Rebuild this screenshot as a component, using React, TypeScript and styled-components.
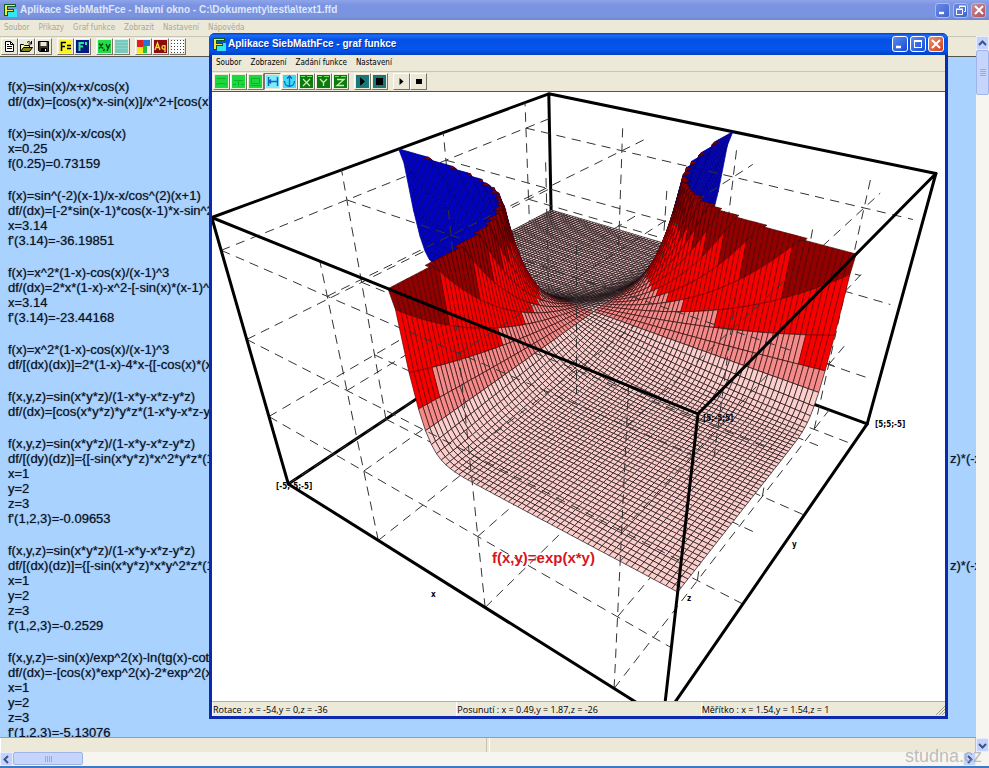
import React from 'react';
import styled, { createGlobalStyle } from 'styled-components';

const GlobalStyle = createGlobalStyle`
  * { box-sizing: border-box; }
  html, body, #root { height: 100%; }
  body { margin: 0; overflow: hidden; background: #ece9d8; }
  button { padding: 0; border: 0; background: none; font: inherit; color: inherit; cursor: default; }
`;

const uiFont = '"DejaVu Sans Condensed", "DejaVu Sans", sans-serif';
const titleFont = '"Liberation Sans", Arial, sans-serif';
const docFont = '"Liberation Sans", Arial, sans-serif';

/* ---------- Surface plot ---------- */

const RANGE = 5;
const CELLS = 100;
const STEP = (2 * RANGE) / CELLS;
const CAMERA = [
  [106.075, 246.438, -64.023, 593.413],
  [24.511, -33.6, -165.081, 337.66],
  [-0.13901, 0.19249, -0.11117, 1],
];

type Point = [number, number];
type Vec = [number, number, number];

const project = ([x, y, z]: Vec): Point => {
  const [px, py, pw] = CAMERA.map(
    (r) => (r[0] * x + r[1] * y + r[2] * z) / RANGE + r[3],
  );
  return [px / pw, py / pw];
};

const toPath = (pts: Point[]) =>
  'M' + pts.map(([x, y]) => `${x.toFixed(1)} ${y.toFixed(1)}`).join('L');

const f = (x: number, y: number) => Math.exp(x * y);
const clampZ = (z: number) => Math.min(z, RANGE);

interface Piece {
  d: string;
  fill: string;
  stroke: string;
}

const cellIndex = (v: number) =>
  Math.max(0, Math.min(CELLS - 1, Math.floor((v + RANGE) / STEP)));

const DASH_ON = 9;
const DASH_OFF = 6;

function dashesAlong(a: Vec, b: Vec): [Vec, Vec][] {
  const out: [Vec, Vec][] = [];
  const n = 600;
  const at = (t: number): Vec => [
    a[0] + (b[0] - a[0]) * t,
    a[1] + (b[1] - a[1]) * t,
    a[2] + (b[2] - a[2]) * t,
  ];
  let previous = project(a);
  let start: Vec | null = a;
  let run = 0;
  for (let i = 1; i <= n; i++) {
    const p = at(i / n);
    const s = project(p);
    run += Math.hypot(s[0] - previous[0], s[1] - previous[1]);
    previous = s;
    if (start && (run >= DASH_ON || i === n)) {
      out.push([start, p]);
      start = null;
      run = 0;
    } else if (!start && run >= DASH_OFF) {
      start = p;
      run = 0;
    }
  }
  return out;
}

function buildPlot(): Piece[] {
  const before = new Map<number, Piece[]>();
  const after = new Map<number, Piece[]>();
  const ticks = [-5, -2, 1, 4];
  const lines: [Vec, Vec][] = [];
  for (const p of ticks) {
    for (const q of ticks) {
      lines.push([[-5, p, q], [5, p, q]]);
      lines.push([[p, -5, q], [p, 5, q]]);
      lines.push([[p, q, -5], [p, q, 5]]);
    }
  }
  for (const [a, b] of lines) {
    for (const [s, e] of dashesAlong(a, b)) {
      const x = (s[0] + e[0]) / 2;
      const y = (s[1] + e[1]) / 2;
      const z = (s[2] + e[2]) / 2;
      const key = cellIndex(x) * CELLS + cellIndex(y);
      const target = z > f(x, y) ? after : before;
      const list = target.get(key) ?? [];
      list.push({ d: toPath([project(s), project(e)]), fill: 'none', stroke: '#333' });
      target.set(key, list);
    }
  }

  const pieces: Piece[] = [];
  for (let i = 0; i < CELLS; i++) {
    for (let j = CELLS - 1; j >= 0; j--) {
      const key = i * CELLS + j;
      const x0 = -RANGE + i * STEP;
      const y0 = -RANGE + j * STEP;
      const x1 = x0 + STEP;
      const y1 = y0 + STEP;
      pieces.push(...(before.get(key) ?? []));
      const heights = [f(x0, y0), f(x1, y0), f(x1, y1), f(x0, y1)];
      if (Math.min(...heights) < RANGE) {
        const quad = [
          project([x0, y0, clampZ(heights[0])]),
          project([x1, y0, clampZ(heights[1])]),
          project([x1, y1, clampZ(heights[2])]),
          project([x0, y1, clampZ(heights[3])]),
        ];
        const area = quad.reduce((sum, p, k) => {
          const q = quad[(k + 1) % 4];
          return sum + p[0] * q[1] - q[0] * p[1];
        }, 0);
        const mid = f(x0 + STEP / 2, y0 + STEP / 2);
        let fill = '#fccfcd';
        let stroke = '#140c0e';
        if (area > 0) {
          fill = '#0000c8';
          stroke = '#000084';
        } else if (mid > 3.9) {
          fill = '#920000';
          stroke = '#4a0000';
        } else if (mid > 1.95) {
          fill = '#f80000';
          stroke = '#6c0000';
        } else if (mid > 1) {
          fill = '#f58a8a';
          stroke = '#2c0808';
        }
        pieces.push({ d: toPath(quad) + 'Z', fill, stroke });
      }
      pieces.push(...(after.get(key) ?? []));
    }
  }
  return pieces;
}

const PIECES = buildPlot();

const edge = (a: Vec, b: Vec) => toPath([project(a), project(b)]);
const BACK_EDGES = [
  edge([-5, -5, -5], [-5, 5, -5]),
  edge([-5, 5, -5], [5, 5, -5]),
  edge([-5, 5, -5], [-5, 5, 5]),
  edge([-5, -5, 5], [-5, 5, 5]),
  edge([-5, 5, 5], [5, 5, 5]),
].join('');
const FRONT_EDGES = [
  edge([-5, -5, 5], [5, -5, 5]),
  edge([5, -5, 5], [5, 5, 5]),
  edge([-5, -5, -5], [-5, -5, 5]),
  edge([5, -5, -5], [5, -5, 5]),
  edge([5, 5, -5], [5, 5, 5]),
  edge([-5, -5, -5], [5, -5, -5]),
  edge([5, -5, -5], [5, 5, -5]),
].join('');

const Plot = styled.svg`
  display: block;
  width: 100%;
  height: 100%;
  background: #fff;
`;
const BoxEdges = styled.path`
  fill: none;
  stroke: #000;
  stroke-width: 3px;
  stroke-linecap: round;
`;
const PointLabel = styled.text`
  font: bold 8px ${uiFont};
  fill: #000;
`;
const FormulaLabel = styled.text`
  font: bold 15px ${docFont};
  fill: #d8141c;
`;

const SurfacePlot = () => (
  <Plot viewBox="212 92 733 609" preserveAspectRatio="xMidYMid slice" role="img" aria-label="f(x,y)=exp(x*y)">
    <BoxEdges d={BACK_EDGES} />
    <g strokeWidth="0.7" strokeLinejoin="round">
      {PIECES.map((p, i) => (
        <path
          key={i}
          d={p.d}
          fill={p.fill}
          stroke={p.stroke}
          strokeWidth={p.fill === 'none' ? 1 : undefined}
        />
      ))}
    </g>
    <BoxEdges d={FRONT_EDGES} />
    <PointLabel x="276" y="489">[-5;-5;-5]</PointLabel>
    <PointLabel x="875" y="427">[5;5;-5]</PointLabel>
    <PointLabel x="703" y="421">[5;-5;5]</PointLabel>
    <PointLabel x="431" y="597">x</PointLabel>
    <PointLabel x="792" y="547">y</PointLabel>
    <PointLabel x="687" y="601">z</PointLabel>
    <FormulaLabel x="492" y="563">f(x,y)=exp(x*y)</FormulaLabel>
  </Plot>
);

/* ---------- Shared chrome ---------- */

const TitleIcon = () => (
  <svg width="14" height="14" viewBox="0 0 14 14" aria-hidden="true">
    <rect x="5" y="6" width="9" height="8" fill="#2fe6f2" />
    <path d="M1 1h12v3H5v2h6v3H5v4H1z" fill="#0b5a1c" />
    <path d="M2 2h10v1H4v4h6v1H4v4H2z" fill="#f4e840" />
  </svg>
);

const Title = styled.h1<{ $active?: boolean }>`
  flex: 1;
  margin: 0;
  font: bold 10px/14px ${titleFont};
  color: ${(p) => (p.$active ? '#fff' : '#dfe7fb')};
  text-shadow: 1px 1px 0 ${(p) => (p.$active ? '#0a2f9a' : 'transparent')};
  white-space: nowrap;
`;

const Caption = styled.button<{ $size: number; $close?: boolean; $dim?: boolean }>`
  display: grid;
  place-items: center;
  width: ${(p) => p.$size}px;
  height: ${(p) => p.$size}px;
  border: 1px solid ${(p) => (p.$dim ? '#a9b9ee' : '#fff')};
  border-radius: 3px;
  background: ${(p) =>
    p.$close
      ? p.$dim
        ? 'linear-gradient(135deg, #c98a95, #b0505f)'
        : 'linear-gradient(135deg, #ee9070, #d0401c)'
      : p.$dim
        ? 'linear-gradient(135deg, #6a8ae6, #3f62d2)'
        : 'linear-gradient(135deg, #5a8cf6, #1a48d0)'};
`;

const CaptionGlyph = ({ kind }: { kind: 'min' | 'max' | 'restore' | 'close' }) => (
  <svg width="12" height="12" viewBox="0 0 12 12" fill="none" stroke="#fff" aria-hidden="true">
    {kind === 'min' && <path d="M2 9h5" strokeWidth="2.4" />}
    {kind === 'max' && <path d="M2 2.5h8M2.5 2v8M9.5 2v8M2 9.5h8M2 3.5h8" />}
    {kind === 'restore' && <path d="M4.5 4V2.5h6v5H9M1.5 5.5h6v5h-6zM1 5h7M4 2h7" />}
    {kind === 'close' && <path d="M2 2l8 8M10 2l-8 8" strokeWidth="2" />}
  </svg>
);

const Menu = styled.nav<{ $disabled?: boolean }>`
  display: flex;
  flex: none;
  align-items: center;
  gap: 9px;
  height: 16px;
  padding: 0 4px;
  background: #ece9d8;
  font: 8px/14px ${uiFont};
  color: ${(p) => (p.$disabled ? '#aaa898' : '#000')};
`;

const ToolBar = styled.div`
  display: flex;
  flex: none;
  gap: 5px;
  height: 21px;
  padding: 1px 1px 0;
  background: #ece9d8;
  border-top: 1px solid #c9c6b4;
  border-bottom: 1px solid #55544c;
`;
const ToolGroup = styled.div`
  display: flex;
`;
const ToolButton = styled.button<{ $pressed?: boolean }>`
  display: grid;
  place-items: center;
  width: 17px;
  height: 17px;
  border: 1px solid;
  border-color: ${(p) => (p.$pressed ? '#77756a #fff #fff #77756a' : '#fff #77756a #77756a #fff')};
`;

const Glyph = ({ children }: { children: React.ReactNode }) => (
  <svg width="13" height="13" viewBox="0 0 13 13" fill="none" stroke="#000" aria-hidden="true">
    {children}
  </svg>
);

const tile = (color: string, children?: React.ReactNode) => (
  <Glyph>
    <rect width="13" height="13" fill={color} stroke="none" />
    {children}
  </Glyph>
);

interface Tool {
  label: string;
  icon: React.ReactNode;
  pressed?: boolean;
}

const mainTools: Tool[][] = [
  [
    {
      label: 'Nový',
      icon: (
        <Glyph>
          <path d="M2.5 1.5h5l3 3v7h-8z" fill="#fff" />
          <path d="M7.5 1.5v3h3M4 6.5h5M4 8.5h5M4 4.5h2" />
        </Glyph>
      ),
    },
    {
      label: 'Otevřít',
      icon: (
        <Glyph>
          <path d="M.5 11.5v-7h3l1 1h5v2" fill="#fff59a" />
          <path d="M.5 11.5l3-4h9l-3 4z" fill="#8a8420" />
          <path d="M7 2.5c1.5-1.5 3-1 4 1M11.5 1v3h-3" />
        </Glyph>
      ),
    },
    {
      label: 'Uložit',
      icon: (
        <Glyph>
          <path d="M1.5 1.5h10v10h-9l-1-1z" fill="#3a3826" />
          <path d="M3.5 2h6v4h-6z" fill="#e8e6da" stroke="none" />
          <path d="M4 8h6v4H4z" fill="#000" stroke="none" />
          <path d="M8 9h1v2H8z" fill="#fff" stroke="none" />
        </Glyph>
      ),
    },
  ],
  [
    {
      label: 'Funkce',
      icon: tile('#f8f428', <path d="M2.5 11V2.5H7M2.5 6.5H6M8 5.5h4M8 8.5h4" strokeWidth="1.5" />),
    },
    {
      label: 'Derivace',
      icon: tile('#06187c', <path d="M3.5 11V3H8M3.5 6.5H7M10 2v3" stroke="#2fe6a0" strokeWidth="2" />),
    },
  ],
  [
    {
      label: 'Graf x,y',
      icon: tile('#22dc44', <path d="M1 3.5l4 5M5 3.5l-4 5M6.5 9l-1 2M8 4l2 4M12 4l-3 7" stroke="#053c10" strokeWidth="1.3" />),
    },
    { label: 'Plocha', icon: tile('#79c8bc', <path d="M0 2.5h13M0 5.5h13M0 8.5h13" stroke="#8ad6ca" />) },
  ],
  [
    {
      label: 'Barvy',
      icon: (
        <Glyph>
          <g stroke="none">
            <path d="M0 0h6v7H0z" fill="#e02020" />
            <path d="M6 0h7v6H6z" fill="#2a74d8" />
            <path d="M0 7h6v6H0z" fill="#f6e81c" />
            <path d="M6 6h4v7H6z" fill="#22c03c" />
            <path d="M10 6h3v7h-3z" fill="#f2f0e4" />
          </g>
        </Glyph>
      ),
    },
    {
      label: 'Písmo',
      icon: tile(
        '#8a0c0c',
        <path d="M1 10l2.5-7L6 10M2 7.5h3M11 5v7M11 6c-4-2-4 4 0 3" stroke="#f8d838" strokeWidth="1.3" />,
      ),
    },
    {
      label: 'Mřížka',
      icon: tile(
        '#fff',
        <path
          d="M.5 0v13M3.5 0v13M6.5 0v13M9.5 0v13M12.500 0v13"
          stroke="#444"
          strokeDasharray="1 2"
        />,
      ),
    },
  ],
];

const letterTile = (d: string) =>
  tile(
    '#0c7a12',
    <>
      <path d="M1 1.5h4M7 1.5h5" stroke="#6be05c" />
      <path d={d} stroke="#c8f0a0" strokeWidth="1.3" />
    </>,
  );

const graphTools: Tool[][] = [
  [
    { label: 'Pohled 1', icon: tile('#1cd83c', <path d="M1 9.5l3-1h5l3 1M2 3.5h9" stroke="#0cb42c" />) },
    { label: 'Pohled 2', icon: tile('#1cd83c', <path d="M2 5.5h9M6.5 5v6M1 9.5h3M9 9.5h3" stroke="#0cb42c" />) },
    { label: 'Pohled 3', icon: tile('#1cd83c', <path d="M2.5 3.5h8v5h-8zM1 10.5h11" stroke="#0cb42c" />) },
    {
      label: 'Posun vodorovně',
      pressed: true,
      icon: tile('#7cecfc', <path d="M2.5 2v9M11.5 2v9M3 6.5h8M5 4.5l-2 2 2 2" stroke="#1464c0" strokeWidth="1.5" />),
    },
    {
      label: 'Posun svisle',
      icon: tile('#3cdcf8', <path d="M6.5 1v11M4 3.500L6.5 1 9 3.5M1.5 6c0 7 10 7 10 0" stroke="#1464c0" strokeWidth="1.3" />),
    },
    { label: 'Osa X', icon: letterTile('M3 4l7 7M10 4l-7 7') },
    { label: 'Osa Y', icon: letterTile('M3 4l3.5 3.500L10 4M6.5 7.5V11') },
    { label: 'Osa Z', icon: letterTile('M3 4.5h7L3 10.5h7') },
  ],
  [
    { label: 'Animace', icon: tile('#1c7878', <path d="M4.5 3v7l4-3.5z" fill="#000" />) },
    { label: 'Zastavit animaci', icon: tile('#1c7878', <path d="M3 3h7v7H3z" fill="#000" stroke="none" />) },
  ],
  [
    { label: 'Spustit', icon: <Glyph><path d="M4.5 3v7l4-3.5z" fill="#000" stroke="none" /></Glyph> },
    { label: 'Stop', icon: <Glyph><path d="M4 4h6v5H4z" fill="#000" stroke="none" /></Glyph> },
  ],
];

const Tools = ({ groups }: { groups: Tool[][] }) => (
  <ToolBar role="toolbar">
    {groups.map((group, i) => (
      <ToolGroup key={i}>
        {group.map((t) => (
          <ToolButton key={t.label} aria-label={t.label} $pressed={t.pressed}>
            {t.icon}
          </ToolButton>
        ))}
      </ToolGroup>
    ))}
  </ToolBar>
);

/* ---------- Main window ---------- */

const Desktop = styled.div`
  position: relative;
  display: flex;
  flex-direction: column;
  height: 100vh;
  border-bottom: 2px solid #3f78c4;
`;
const MainTitleBar = styled.header`
  display: flex;
  flex: none;
  align-items: center;
  gap: 3px;
  height: 20px;
  padding: 0 3px;
  background: linear-gradient(#8ea4ea, #7b93e0 25%, #7a94e0 80%, #6f88d4);
`;
const Middle = styled.div`
  display: flex;
  flex: 1;
  min-height: 0;
`;
const Column = styled.div`
  display: flex;
  flex: 1;
  flex-direction: column;
  min-width: 0;
`;
const Document = styled.main`
  display: flex;
  flex: 1;
  flex-direction: column;
  gap: 17px;
  min-height: 0;
  padding: 22px 0 0 8px;
  overflow: hidden;
  background: #aad2fe;
  color: #0c1424;
  font: 13px/15px ${docFont};
  text-shadow: 0 0 1px rgba(12, 20, 36, 0.6);
`;
const Block = styled.section`
  flex: none;
`;
const Line = styled.p`
  display: flex;
  justify-content: space-between;
  margin: 0;
  white-space: pre;
`;
const LineEnd = styled.span`
  width: 26px;
`;
const MainStatus = styled.footer`
  display: grid;
  flex: none;
  grid-template-columns: 1fr 1fr;
  gap: 2px;
  height: 15px;
  background: #ece9d8;
  border-top: 1px solid #a09d8c;
`;
const MainStatusCell = styled.div`
  border-right: 1px solid #c5c2b0;
  border-left: 1px solid #fff;
`;

const VScroll = styled.div`
  z-index: 1;
  display: flex;
  flex-direction: column;
  width: 13px;
  background: #f6f5f0;
`;
const HScroll = styled.div`
  display: flex;
  flex: none;
  height: 14px;
  padding-right: 13px;
  background: #f6f5f0;
`;
const ScrollButton = styled.button`
  display: grid;
  flex: none;
  place-items: center;
  width: 13px;
  height: 14px;
  border: 1px solid #e4ecfe;
  border-radius: 2px;
  background: #c3d3fb;
`;
const ScrollThumb = styled.div<{ $vertical?: boolean }>`
  display: grid;
  flex: none;
  place-items: center;
  width: ${(p) => (p.$vertical ? '13px' : '70px')};
  height: ${(p) => (p.$vertical ? '45px' : '13px')};
  border: 1px solid #9fb5ea;
  border-radius: 2px;
  background: #c6d5fb;
`;
const Track = styled.div`
  flex: 1;
`;
const Chevron = ({ d }: { d: string }) => (
  <svg width="9" height="9" viewBox="0 0 9 9" fill="none" stroke="#3c5288" strokeWidth="2" aria-hidden="true">
    <path d={d} />
  </svg>
);
const Grip = ({ d }: { d: string }) => (
  <svg width="9" height="9" viewBox="0 0 9 9" fill="none" stroke="#93aae6" aria-hidden="true">
    <path d={d} />
  </svg>
);

const Watermark = styled.span`
  position: absolute;
  right: 7px;
  bottom: 0;
  font: 18px/20px ${docFont};
  color: rgba(150, 150, 150, 0.6);
`;

/* ---------- Graph window ---------- */

const GraphWindow = styled.section`
  position: absolute;
  inset: 33px 41px 47px 209px;
  display: flex;
  flex-direction: column;
  padding: 0 3px 3px;
  border-radius: 6px 6px 0 0;
  background: #0c2ab0;
  overflow: hidden;
`;
const GraphTitleBar = styled.header`
  display: flex;
  flex: none;
  align-items: center;
  gap: 2px;
  height: 22px;
  margin: 0 -3px;
  padding: 0 4px 0 3px;
  background: linear-gradient(#0a3cc8, #1a6cf8 12%, #0650e4 30%, #0456ee 75%, #0340c0);
`;
const Canvas = styled.div`
  flex: 1;
  min-height: 0;
  overflow: hidden;
  background: #fff;
`;
const GraphStatus = styled.footer`
  display: grid;
  grid-template-columns: repeat(3, 1fr);
  flex: none;
  height: 15px;
  background: #ece9d8;
  border-top: 1px solid #b5b29f;
  font: 9px/13px "Open Sans", sans-serif;
  color: #000;
`;
const GraphStatusCell = styled.div`
  display: flex;
  align-items: center;
  justify-content: space-between;
  border-left: 1px solid #fff;
  white-space: nowrap;
`;

const blocks: string[][] = [
  ['f(x)=sin(x)/x+x/cos(x)', 'df/(dx)=[cos(x)*x-sin(x)]/x^2+[cos(x)'],
  ['f(x)=sin(x)/x-x/cos(x)', 'x=0.25', 'f(0.25)=0.73159'],
  ['f(x)=sin^(-2)(x-1)/x-x/cos^(2)(x+1)', 'df/(dx)=[-2*sin(x-1)*cos(x-1)*x-sin^2', 'x=3.14', "f'(3.14)=-36.19851"],
  ['f(x)=x^2*(1-x)-cos(x)/(x-1)^3', 'df/(dx)=2*x*(1-x)-x^2-[-sin(x)*(x-1)^3', 'x=3.14', "f'(3.14)=-23.44168"],
  ['f(x)=x^2*(1-x)-cos(x)/(x-1)^3', 'df/[(dx)(dx)]=2*(1-x)-4*x-{[-cos(x)*(x'],
  ['f(x,y,z)=sin(x*y*z)/(1-x*y-x*z-y*z)', 'df/(dx)=[cos(x*y*z)*y*z*(1-x*y-x*z-y'],
  [
    'f(x,y,z)=sin(x*y*z)/(1-x*y-x*z-y*z)',
    'df/[(dy)(dz)]={[-sin(x*y*z)*x^2*y*z*(1|z)*(-x',
    'x=1', 'y=2', 'z=3', "f'(1,2,3)=-0.09653",
  ],
  [
    'f(x,y,z)=sin(x*y*z)/(1-x*y-x*z-y*z)',
    'df/[(dx)(dz)]={[-sin(x*y*z)*x*y^2*z*(1|z)*(-x',
    'x=1', 'y=2', 'z=3', "f'(1,2,3)=-0.2529",
  ],
  [
    'f(x,y,z)=-sin(x)/exp^2(x)-ln(tg(x)-cot',
    'df/(dx)=-[cos(x)*exp^2(x)-2*exp^2(x)',
    'x=1', 'y=2', 'z=3', "f'(1,2,3)=-5.13076",
  ],
];

export default function App() {
  return (
    <Desktop>
      <GlobalStyle />
      <MainTitleBar>
        <TitleIcon />
        <Title>Aplikace SiebMathFce - hlavní okno - C:\Dokumenty\test\a\text1.ffd</Title>
        <Caption $size={15} $dim aria-label="Minimalizovat"><CaptionGlyph kind="min" /></Caption>
        <Caption $size={15} $dim aria-label="Obnovit"><CaptionGlyph kind="restore" /></Caption>
        <Caption $size={15} $dim $close aria-label="Zavřít"><CaptionGlyph kind="close" /></Caption>
      </MainTitleBar>
      <Menu $disabled>
        {['Soubor', 'Příkazy', 'Graf funkce', 'Zobrazit', 'Nastavení', 'Nápověda'].map((m) => (
          <button key={m}>{m}</button>
        ))}
      </Menu>
      <Middle>
        <Column>
          <Tools groups={mainTools} />
          <Document>
            {blocks.map((lines, i) => (
              <Block key={i}>
                {lines.map((line) => {
                  const [head, end] = line.split('|');
                  return (
                    <Line key={line}>
                      <span>{head}</span>
                      {end && <LineEnd>{end}</LineEnd>}
                    </Line>
                  );
                })}
              </Block>
            ))}
          </Document>
          <MainStatus>
            <MainStatusCell />
            <MainStatusCell />
          </MainStatus>
        </Column>
        <VScroll>
          <ScrollButton aria-label="Nahoru"><Chevron d="M1 6l3.5-3.500L8 6" /></ScrollButton>
          <ScrollThumb $vertical><Grip d="M2 1.5h6M2 3.5h6M2 5.5h6M2 7.5h6" /></ScrollThumb>
          <Track />
          <ScrollButton aria-label="Dolů"><Chevron d="M1 3l3.5 3.500L8 3" /></ScrollButton>
        </VScroll>
      </Middle>
      <HScroll>
        <ScrollButton aria-label="Vlevo"><Chevron d="M6 1L2.5 4.5 6 8" /></ScrollButton>
        <ScrollThumb><Grip d="M1.5 2v6M3.5 2v6M5.5 2v6M7.5 2v6" /></ScrollThumb>
        <Track />
        <ScrollButton aria-label="Vpravo"><Chevron d="M3 1l3.5 3.500L3 8" /></ScrollButton>
      </HScroll>

      <GraphWindow aria-label="graf funkce">
        <GraphTitleBar>
          <TitleIcon />
          <Title as="h2" $active>Aplikace SiebMathFce - graf funkce</Title>
          <Caption $size={16} aria-label="Minimalizovat"><CaptionGlyph kind="min" /></Caption>
          <Caption $size={16} aria-label="Maximalizovat"><CaptionGlyph kind="max" /></Caption>
          <Caption $size={16} $close aria-label="Zavřít"><CaptionGlyph kind="close" /></Caption>
        </GraphTitleBar>
        <Menu>
          {['Soubor', 'Zobrazení', 'Zadání funkce', 'Nastavení'].map((m) => (
            <button key={m}>{m}</button>
          ))}
        </Menu>
        <Tools groups={graphTools} />
        <Canvas>
          <SurfacePlot />
        </Canvas>
        <GraphStatus>
          <GraphStatusCell>Rotace : x = -54,y = 0,z = -36</GraphStatusCell>
          <GraphStatusCell>Posunutí : x = 0.49,y = 1.87,z = -26</GraphStatusCell>
          <GraphStatusCell>
            Měřítko : x = 1.54,y = 1.54,z = 1
            <svg width="12" height="12" viewBox="0 0 12 12" stroke="#a09d8c" aria-hidden="true">
              <path d="M3 12l9-9M6 12l6-6M9 12l3-3" />
            </svg>
          </GraphStatusCell>
        </GraphStatus>
      </GraphWindow>
      <Watermark>studna.cz</Watermark>
    </Desktop>
  );
}
